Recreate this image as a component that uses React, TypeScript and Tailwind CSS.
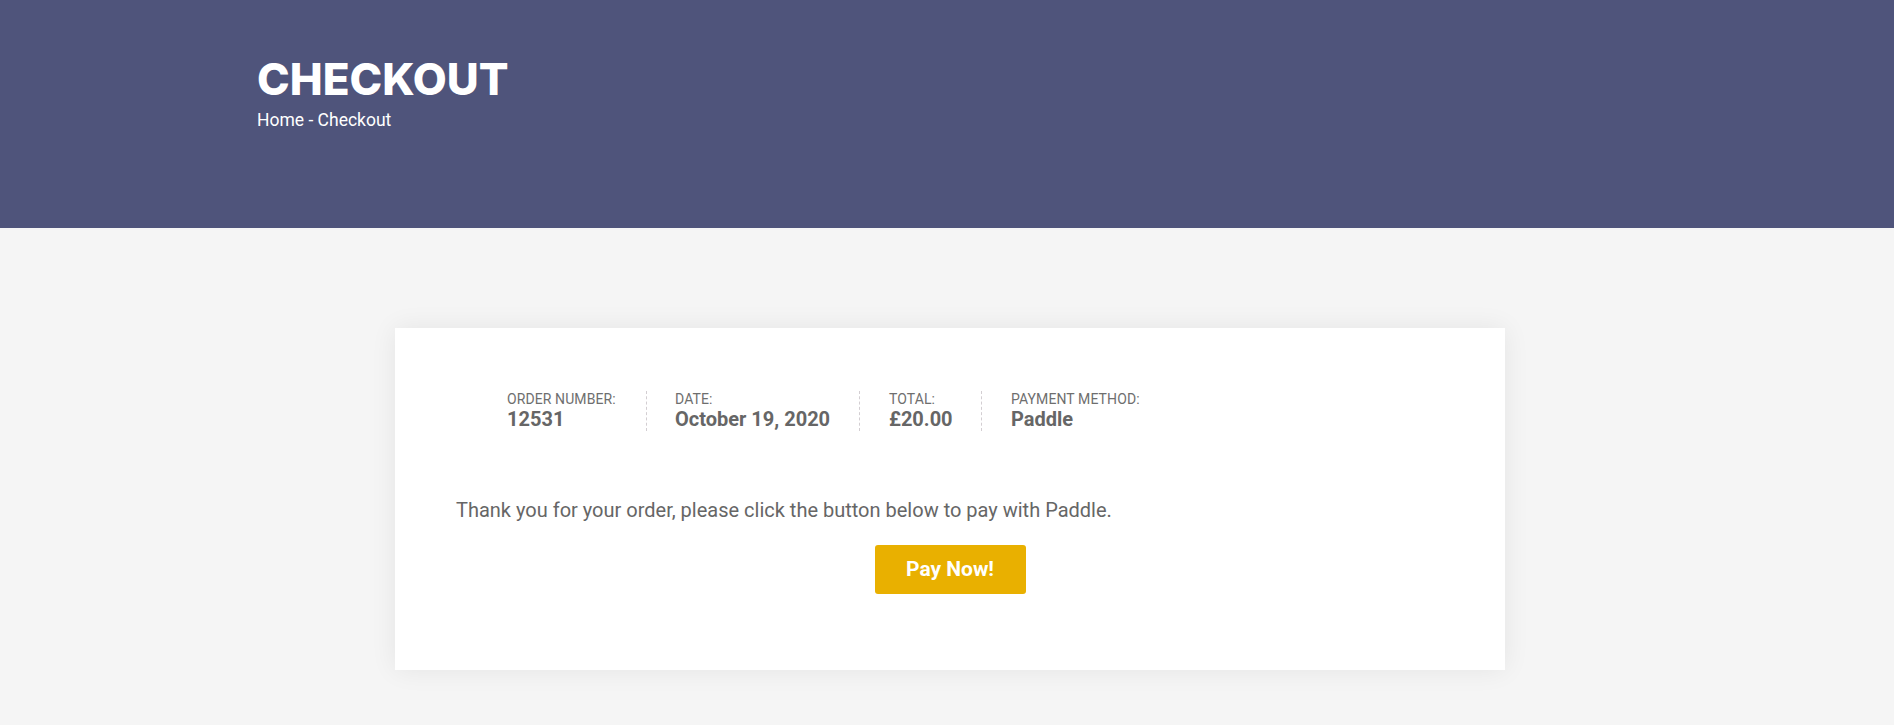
import React from "react";

const items = [
  { label: "ORDER NUMBER:", value: "12531", w: "w-[140px]", mr: "mr-[28px]", border: true },
  { label: "DATE:", value: "October 19, 2020", w: "w-[185px]", mr: "mr-[29px]", border: true },
  { label: "TOTAL:", value: "£20.00", w: "w-[93px]", mr: "mr-[29px]", border: true },
  { label: "PAYMENT METHOD:", value: "Paddle", w: "w-auto", mr: "", border: false },
];

export default function App() {
  return (
    <div className="min-h-[725px] bg-[#f5f5f5] font-['Roboto','Liberation_Sans',sans-serif]">
      <header className="h-[228px] bg-[#4f547b]">
        <div className="mx-auto w-[1380px] pt-[55px]">
          <h1 className="font-['Inter','Roboto',sans-serif] text-[44px] font-extrabold leading-[48px] text-white">
            CHECKOUT
          </h1>
          <div className="mt-[5px] text-[17.5px] leading-[24px] text-white">Home - Checkout</div>
        </div>
      </header>

      <div className="flex justify-center pl-[6px] pt-[100px]">
        <div className="w-[1110px] bg-white px-[61px] pt-[63px] pb-[76px] shadow-[0_0_25px_rgba(0,0,0,0.07)]">
          <ul className="ml-[51px] flex">
            {items.map((it) => (
              <li
                key={it.label}
                className={`flex flex-col ${it.w} ${it.mr} ${
                  it.border ? "border-r border-dashed border-[#d3ced2]" : ""
                }`}
              >
                <span className="text-[14px] leading-[16px] tracking-[0.1px] text-[#6e6e6e]">{it.label}</span>
                <span className="text-[20px] font-bold leading-[24px] text-[#666666]">{it.value}</span>
              </li>
            ))}
          </ul>
          <p className="mt-[66px] text-[20px] leading-[27px] text-[#666666]">
            Thank you for your order, please click the button below to pay with Paddle.
          </p>
          <div className="mt-[21px] flex justify-center">
            <button className="flex h-[49px] w-[151px] items-center justify-center rounded-[3px] bg-[#e9b000] text-[21px] font-bold text-white">
              Pay Now!
            </button>
          </div>
        </div>
      </div>
    </div>
  );
}
